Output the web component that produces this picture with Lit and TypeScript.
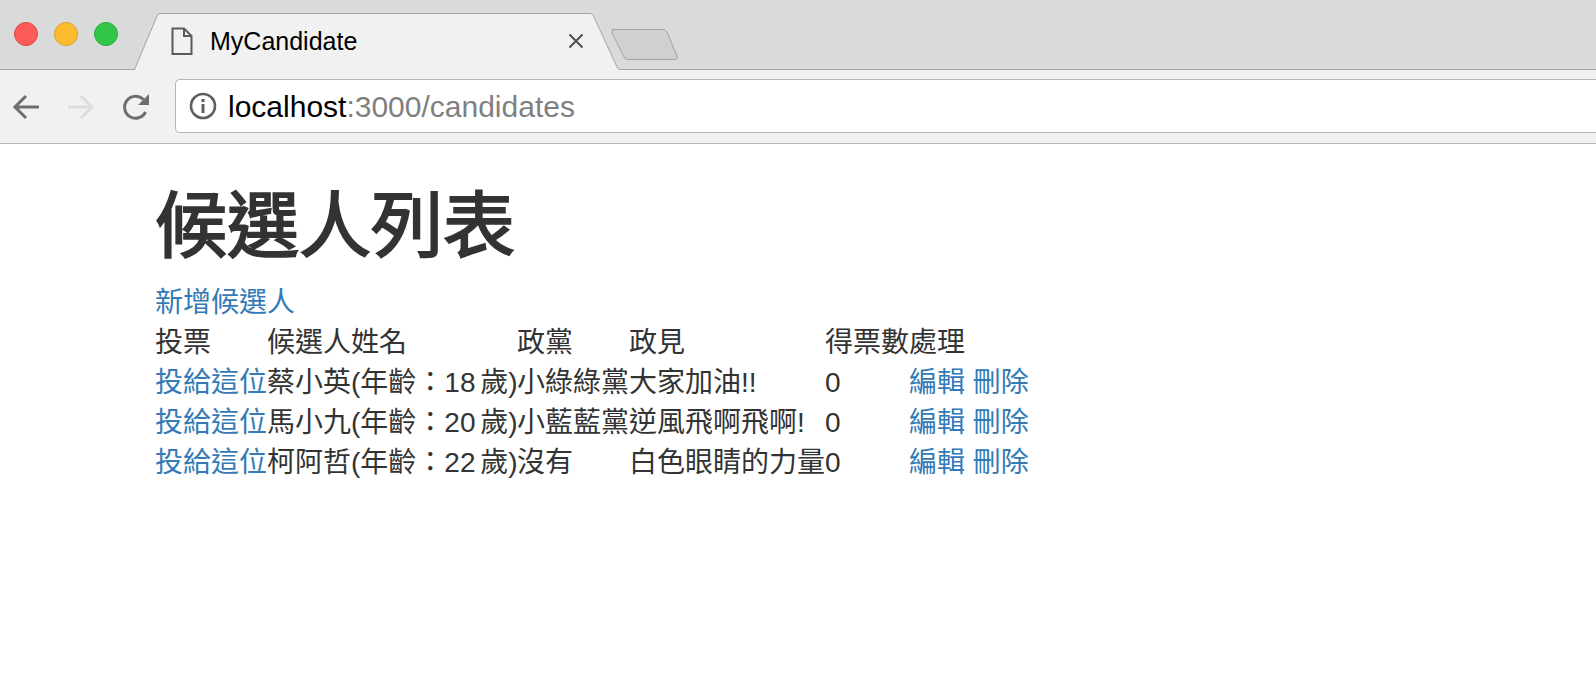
import { LitElement, html, css } from "lit";
import { customElement } from "lit/decorators.js";

const rows = [
  ["蔡小英(年齡：18 歲)", "小綠綠黨", "大家加油!!"],
  ["馬小九(年齡：20 歲)", "小藍藍黨", "逆風飛啊飛啊!"],
  ["柯阿哲(年齡：22 歲)", "沒有", "白色眼睛的力量"],
];

@customElement("app-root")
export class AppRoot extends LitElement {
  static styles = css`
    :host {
      display: block;
      width: 1596px;
      height: 674px;
      overflow: hidden;
      background: #fff;
      font-family: "Liberation Sans", "Noto Sans CJK TC", sans-serif;
      color: #333;
    }
    .strip {
      position: relative;
      box-sizing: border-box;
      height: 70px;
      background: #d9dada;
      border-bottom: 1px solid #a4a4a4;
      display: flex;
      align-items: flex-start;
    }
    .strip-art {
      position: absolute;
      left: 0;
      top: 0;
    }
    .lights {
      display: flex;
      gap: 16px;
      padding: 22px 0 0 14px;
      position: relative;
    }
    .light {
      width: 24px;
      height: 24px;
      box-sizing: border-box;
      border-radius: 50%;
      border: 1px solid;
    }
    .red { background: #fc5c57; border-color: #e2463f; }
    .yellow { background: #fdbc2e; border-color: #e0a028; }
    .green { background: #33c748; border-color: #2aac39; }
    .tab {
      position: relative;
      display: flex;
      align-items: center;
      margin-left: 53px;
      margin-top: 14px;
      height: 54px;
      width: 417px;
    }
    .doc { display: block; flex: none; }
    .title {
      margin-left: 17px;
      font-size: 25px;
      color: #000;
      flex: 1;
      line-height: 54px;
    }
    .close { display: block; flex: none; margin-right: 4px; }
    .toolbar {
      box-sizing: border-box;
      height: 74px;
      background: #f1f1f1;
      border-bottom: 1px solid #b9b9b9;
      display: flex;
      align-items: center;
      padding-bottom: 2px;
    }
    .nav {
      display: flex;
      align-items: center;
      flex: none;
      width: 175px;
      padding: 2px 0 0 12px;
      box-sizing: border-box;
      gap: 27px;
    }
    .omni {
      flex: 1;
      box-sizing: border-box;
      height: 54px;
      background: #fff;
      border: 1px solid #b5b5b5;
      border-right: none;
      border-radius: 5px 0 0 5px;
      display: flex;
      align-items: center;
      padding-left: 13px;
      gap: 12px;
    }
    .url { font-size: 30px; color: #000; line-height: 54px; padding-top: 2px; margin-left: -1px; }
    .url span { color: #7f7f7f; }
    .content { padding: 0 0 0 155px; }
    h1 {
      margin: 43px 0 17px;
      font-size: 72px;
      line-height: 79px;
      font-weight: 400;
      -webkit-text-stroke: 2px #333;
      color: #333;
    }
    a {
      color: #337ab7;
      text-decoration: none;
      font-size: 28px;
      line-height: 40px;
    }
    .new { display: block; height: 40px; }
    table {
      border-collapse: collapse;
      table-layout: fixed;
      width: 864px;
      font-size: 28px;
      line-height: 40px;
      color: #333;
    }
    td, th { padding: 0; font-weight: 400; text-align: left; white-space: nowrap; }
    .name { word-spacing: -3px; }
    .col-vote { width: 112px; }
    .col-name { width: 250px; }
    .col-party { width: 112px; }
    .col-plat { width: 196px; }
    .col-count { width: 84px; }
    .col-act { width: 110px; }
  `;

  render() {
    return html`
      <div class="strip">
        <svg class="strip-art" width="700" height="70" viewBox="0 0 700 70">
          <path d="M134 70 H135 L157 16 Q158 13.5 161 13.5 H590 Q593 13.5 594 16 L617 67 Q618 69.5 620 69.5 V70 Z" fill="#f1f1f1"/>
          <path d="M134.5 69.5 L157 16 Q158 13.5 161 13.5 H590 Q592.5 13.5 593.5 16 L617 67 Q618 69.5 620 69.5" fill="none" stroke="#a4a4a4" stroke-width="1"/>
          <path d="M612 29.5 H663 Q666 29.5 667 32 L677 56 Q678 59.5 675 59.5 H628 Q625 59.5 624 57 L612 33 Q611 29.5 614 29.5 Z" fill="#d0d0d0" stroke="#a3a3a3" stroke-width="1"/>
        </svg>
        <div class="lights">
          <div class="light red"></div>
          <div class="light yellow"></div>
          <div class="light green"></div>
        </div>
        <div class="tab">
          <svg class="doc" width="22" height="28" viewBox="0 0 22 28">
            <path d="M1.5 1.5 H13 L20.5 9 V27 H1.5 Z M13 1.5 V9 H20.5" fill="none" stroke="#5a5a5a" stroke-width="2"/>
          </svg>
          <div class="title">MyCandidate</div>
          <svg class="close" width="16" height="16" viewBox="0 0 16 16">
            <path d="M1.5 1.5 L14.5 14.5 M14.5 1.5 L1.5 14.5" stroke="#505050" stroke-width="2" fill="none"/>
          </svg>
        </div>
      </div>
      <div class="toolbar">
        <div class="nav">
          <svg width="28" height="28" viewBox="0 0 28 28">
            <path d="M27 14 H3 M14 3 L3 14 L14 25" fill="none" stroke="#6e6e6e" stroke-width="3"/>
          </svg>
          <svg width="28" height="28" viewBox="0 0 28 28">
            <path d="M1 14 H25 M14 3 L25 14 L14 25" fill="none" stroke="#dcdcdc" stroke-width="3"/>
          </svg>
          <svg width="28" height="28" viewBox="0 0 28 28">
            <path d="M23.5 19 A11 11 0 1 1 21.5 6.5" fill="none" stroke="#6e6e6e" stroke-width="3"/>
            <path d="M27 1 V12 H16 Z" fill="#6e6e6e"/>
          </svg>
        </div>
        <div class="omni">
          <svg width="28" height="28" viewBox="0 0 28 28">
            <circle cx="14" cy="14" r="12" fill="none" stroke="#5f5f5f" stroke-width="2.6"/>
            <rect x="12.5" y="12" width="3" height="9" fill="#5f5f5f"/>
            <rect x="12.5" y="7" width="3" height="3" fill="#5f5f5f"/>
          </svg>
          <div class="url">localhost<span>:3000/candidates</span></div>
        </div>
      </div>
      <div class="content">
        <h1>候選人列表</h1>
        <a class="new" href="#">新增候選人</a>
        <table>
          <tr>
            <th class="col-vote">投票</th>
            <th class="col-name">候選人姓名</th>
            <th class="col-party">政黨</th>
            <th class="col-plat">政見</th>
            <th class="col-count">得票數</th>
            <th class="col-act">處理</th>
          </tr>
          ${rows.map(
            (r) => html`<tr>
              <td><a href="#">投給這位</a></td>
              <td class="name">${r[0]}</td>
              <td>${r[1]}</td>
              <td>${r[2]}</td>
              <td>0</td>
              <td><a href="#">編輯</a> <a href="#">刪除</a></td>
            </tr>`
          )}
        </table>
      </div>
    `;
  }
}
